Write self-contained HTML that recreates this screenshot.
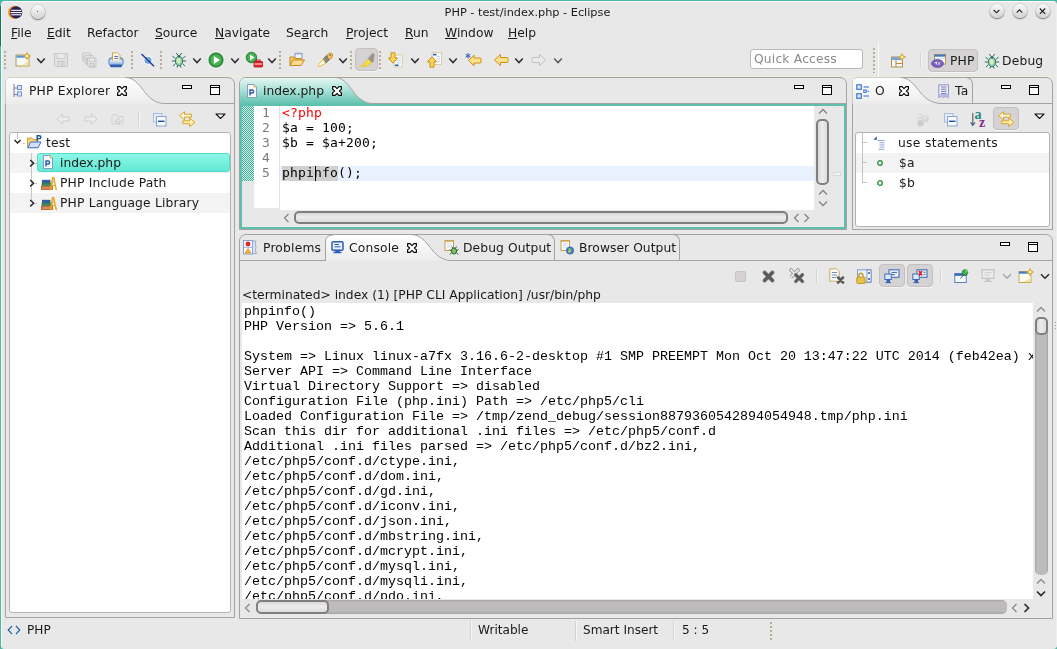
<!DOCTYPE html>
<html lang="en">
<head>
<meta charset="utf-8">
<title>PHP - test/index.php - Eclipse</title>
<style>
*{box-sizing:border-box;margin:0;padding:0}
html,body{width:1057px;height:649px;overflow:hidden}
body{position:relative;background:#e8e8e8;font-family:"DejaVu Sans","Liberation Sans",sans-serif;font-size:12.3px;color:#1a1a1a;line-height:1}
.abs,.t,.ic{position:absolute}
.t{letter-spacing:.18px;white-space:pre;line-height:16px;height:16px;will-change:transform}
.ic{overflow:visible}
u{text-decoration:underline;text-underline-offset:1px;text-decoration-thickness:1px}
.mono{font-family:"DejaVu Sans Mono","Liberation Mono",monospace;font-size:13px;letter-spacing:.174px !important}
.con{font-family:"Liberation Mono","DejaVu Sans Mono",monospace;font-size:13.33px}
.panel{position:absolute;border:1px solid #a9a9a9;border-radius:6px 6px 0 0;background:#e8e8e8}
.white{position:absolute;background:#fff;border:1px solid #b4b4b4;border-radius:3px}
.wbtn{position:absolute;width:14px;height:14px;border-radius:50%;background:linear-gradient(#fbfbfb,#d2d2d2);box-shadow:0 1px 1.5px rgba(0,0,0,.5),0 0 0 .6px rgba(0,0,0,.13)}
.hdl{position:absolute;width:2px;height:18px;background:repeating-linear-gradient(#b9ad95 0 1.7px,transparent 1.7px 4px)}

.pb{position:absolute;border:1px solid #a3a3a3;border-radius:7px 7px 0 0}
.hline{position:absolute;height:1px;background:#a3a3a3}
.min{position:absolute;width:10px;height:4px;border:1px solid #000;background:#fff}
.max{position:absolute;width:10px;height:10px;border:1px solid #000;background:linear-gradient(#fff 1px,#000 1px,#000 2px,#fff 2px)}
.row{position:absolute;left:0;width:100%;height:20px}
.alt{background:#f3f3f3}
.pressed{position:absolute;border-radius:4px;background:#d4d2d2;border:1px solid #c2c0c0;box-shadow:0 1px 0 #f4f4f4}
.vsep{position:absolute;width:2px;background:linear-gradient(90deg,#d2d2d2 50%,#f6f6f6 50%)}
#menubar .t{letter-spacing:0}
.thumb{position:absolute;border:2px solid #837e7e;border-radius:5px}
.tv{background:linear-gradient(90deg,#d9d8d8,#ececec 45%,#dedddd)}
.th{background:linear-gradient(#d9d8d8,#ececec 45%,#dedddd)}
.st .t{letter-spacing:0;font-size:12.1px}
</style>
</head>
<body>
<!-- window frame -->
<div class="abs" id="frame-bg" style="left:0;top:0;width:1057px;height:649px;background:#4cb8a5"></div>
<div class="abs" id="frame-dark" style="left:0;top:6px;width:1px;height:40px;background:#0a7561"></div>
<div class="abs" id="win" style="left:1px;top:1px;width:1056px;height:648px;background:#e8e8e8;border-radius:4px;border-top:1px solid #fdfbfb;border-left:1px solid #fdfbfb;border-right:1px solid #efefef"></div>
<div class="abs" style="left:2px;top:76px;width:1053px;height:1px;background:#f2ecdb"></div>
<!-- TITLEBAR -->
<div id="titlebar">
<svg class="ic" style="left:8.3px;top:5px" width="15" height="15" viewBox="0 0 15 15">
<circle cx="6.6" cy="7.4" r="6.6" fill="#f7941e"/>
<circle cx="8.1" cy="7.4" r="6.2" fill="#2c2255"/>
<rect x="3.2" y="4.8" width="10" height="1.1" fill="#fff"/>
<rect x="2.4" y="7" width="11.6" height="1.1" fill="#fff"/>
<rect x="3.2" y="9.2" width="10" height="1.1" fill="#fff"/>
</svg>
<div class="wbtn" style="left:30.5px;top:4.5px"></div>
<div class="abs" style="left:37px;top:11px;width:1px;height:1px;background:#555"></div>
<div class="t" style="left:444px;top:5px;font-size:11.3px;letter-spacing:0;width:167px;text-align:center">PHP - test/index.php - Eclipse</div>
<div class="wbtn" style="left:989.5px;top:4.3px"></div>
<div class="wbtn" style="left:1012.5px;top:4.3px"></div>
<div class="wbtn" style="left:1035.5px;top:4.3px"></div>
<svg class="ic" style="left:989px;top:4px" width="15" height="15" viewBox="0 0 15 15"><path d="M4.7 6 L7.5 8.8 L10.3 6" fill="none" stroke="#222" stroke-width="1.15"/></svg>
<svg class="ic" style="left:1012px;top:4px" width="15" height="15" viewBox="0 0 15 15"><path d="M4.7 8.6 L7.5 5.8 L10.3 8.6" fill="none" stroke="#222" stroke-width="1.15"/></svg>
<svg class="ic" style="left:1035px;top:4px" width="15" height="15" viewBox="0 0 15 15"><path d="M4.8 4.5 L10.2 9.9 M10.2 4.5 L4.8 9.9" fill="none" stroke="#222" stroke-width="1.15"/></svg>
</div>
<!-- MENUBAR -->
<div id="menubar">
<div class="t" style="left:11px;top:25px"><u>F</u>ile</div>
<div class="t" style="left:47px;top:25px"><u>E</u>dit</div>
<div class="t" style="left:87px;top:25px">Refactor</div>
<div class="t" style="left:155px;top:25px"><u>S</u>ource</div>
<div class="t" style="left:215px;top:25px"><u>N</u>avigate</div>
<div class="t" style="left:286px;top:25px">Se<u>a</u>rch</div>
<div class="t" style="left:346px;top:25px"><u>P</u>roject</div>
<div class="t" style="left:405px;top:25px"><u>R</u>un</div>
<div class="t" style="left:444.6px;top:25px"><u>W</u>indow</div>
<div class="t" style="left:508px;top:25px"><u>H</u>elp</div>
</div>
<!-- TOOLBAR -->
<div id="toolbar">
<div class="hdl" style="left:4px;top:51px"></div>
<svg class="ic" style="left:14.5px;top:52px" width="16" height="16" viewBox="0 0 16 16"><rect x="1" y="3" width="13" height="11" fill="#f6faff" stroke="#b8983e" stroke-width="1"/><rect x="1.5" y="3.5" width="12" height="2.2" fill="#4a96e0"/><path d="M3 13.5 Q10 13 13.5 7 L13.5 13.5 Z" fill="#f3e3a8"/><path d="M12 0.5 L13 3 L15.5 4 L13 5 L12 7.5 L11 5 L8.5 4 L11 3 Z" fill="#fff6c8" stroke="#d9a520" stroke-width="1"/></svg>
<svg class="ic" style="left:36px;top:57px" width="10" height="8" viewBox="0 0 10 8"><path d="M1.2 1.6 L5 5.6 L8.8 1.6" fill="none" stroke="#2e2e2e" stroke-width="1.5"/></svg>
<svg class="ic" style="left:52.5px;top:52px" width="16" height="16" viewBox="0 0 16 16"><path d="M1.5 1.5 H14.5 V14.5 H3 L1.5 13 Z" fill="#e3e3e3" stroke="#c6c6c6"/><rect x="4" y="1.5" width="8" height="5" fill="#e9e9e9" stroke="#cdcdcd"/><rect x="5" y="9.5" width="6" height="5" fill="#dedede" stroke="#c6c6c6"/><rect x="8" y="11" width="1.5" height="2.5" fill="#c8c8c8"/></svg>
<svg class="ic" style="left:80.5px;top:52px" width="16" height="16" viewBox="0 0 16 16"><path d="M1.5 1 H9.5 V4 H3 V9 H1.5 Z" fill="#e3e3e3" stroke="#cacaca"/><path d="M4 3.5 H12 V6 H5.5 V12 H4 Z" fill="#e3e3e3" stroke="#cacaca"/><path d="M6.5 6 H15 V15 H8 L6.5 13.5 Z" fill="#e2e2e2" stroke="#c6c6c6"/><rect x="8.5" y="6" width="5" height="3.5" fill="#eaeaea" stroke="#cdcdcd"/><rect x="9" y="11.5" width="4" height="3.5" fill="#dcdcdc" stroke="#c6c6c6"/></svg>
<svg class="ic" style="left:107.5px;top:52px" width="16" height="16" viewBox="0 0 16 16"><defs><linearGradient id="gpr" x1="0" y1="0" x2="0" y2="1"><stop offset="0" stop-color="#c9dbf4"/><stop offset="1" stop-color="#8db0e2"/></linearGradient></defs><rect x="1" y="6" width="14" height="7.5" rx="2.2" fill="url(#gpr)" stroke="#3f6fb8" stroke-width="1"/><path d="M4.5 9 V0.8 H9.5 L12 3.3 V9 Z" fill="#fffdf2" stroke="#cfa44a" stroke-width="1"/><path d="M6.3 4.4 H10.3 M6.3 6.4 H10.3" stroke="#4a6fc0" stroke-width="1"/><path d="M1.5 9 H14.5 V12 Q14.5 13 13.5 13 H2.5 Q1.5 13 1.5 12 Z" fill="url(#gpr)"/><path d="M2 9 H14" stroke="#e8f0fb" stroke-width="1"/><rect x="2" y="12.6" width="12" height="2.6" rx="1.3" fill="#2f5fb0"/></svg>
<div class="hdl" style="left:131px;top:51px"></div>
<svg class="ic" style="left:139.5px;top:52px" width="16" height="16" viewBox="0 0 16 16"><circle cx="8" cy="8.2" r="4.4" fill="#fff"/><circle cx="8" cy="8.2" r="3.5" fill="#6aa3d4"/><circle cx="7.4" cy="7.6" r="1.8" fill="#9cc4e6"/><path d="M1.5 2 L14 14.2" stroke="#1a2f9a" stroke-width="1.3"/></svg>
<div class="hdl" style="left:160px;top:51px"></div>
<svg class="ic" style="left:170.5px;top:52px" width="16" height="16" viewBox="0 0 16 16"><path d="M8 4.5 L5.2 1 M8 4.5 L10.8 1 M4.5 6.5 L1.5 4.2 M11.5 6.5 L14.5 4.2 M4 9 H0.8 M12 9 H15.2 M4.5 11.5 L2 14.2 M11.5 11.5 L14 14.2 M6.8 13 L6 15.6 M9.2 13 L10 15.6" stroke="#2a6f66" stroke-width="1" fill="none"/><ellipse cx="8" cy="9" rx="3.6" ry="4.7" fill="#9ccf9a" stroke="#2a7a66" stroke-width="1"/><ellipse cx="7.6" cy="8.6" rx="2" ry="2.9" fill="#d2ecc8"/><circle cx="8" cy="4.4" r="1.3" fill="#2a7a66"/></svg>
<svg class="ic" style="left:192px;top:57px" width="10" height="8" viewBox="0 0 10 8"><path d="M1.2 1.6 L5 5.6 L8.8 1.6" fill="none" stroke="#2e2e2e" stroke-width="1.5"/></svg>
<svg class="ic" style="left:208px;top:52px" width="16" height="16" viewBox="0 0 16 16"><circle cx="8" cy="8" r="7" fill="#2f9a3f" stroke="#1d7a2c" stroke-width="1"/><circle cx="8" cy="8" r="5.6" fill="#46b454"/><path d="M5.8 4 L12 8 L5.8 12 Z" fill="#fff"/></svg>
<svg class="ic" style="left:230px;top:57px" width="10" height="8" viewBox="0 0 10 8"><path d="M1.2 1.6 L5 5.6 L8.8 1.6" fill="none" stroke="#2e2e2e" stroke-width="1.5"/></svg>
<svg class="ic" style="left:245.5px;top:52px" width="16" height="16" viewBox="0 0 16 16"><circle cx="5.5" cy="5.5" r="5.3" fill="#2f9a3f" stroke="#1d7a2c" stroke-width=".8"/><circle cx="5.5" cy="5.5" r="4.2" fill="#46b454"/><path d="M4 2.6 L8.6 5.5 L4 8.4 Z" fill="#fff"/><rect x="8" y="9.5" width="8.5" height="5.5" rx=".8" fill="#e3262a" stroke="#b30d12" stroke-width=".8"/><rect x="10.5" y="8" width="3.5" height="2" fill="none" stroke="#c4151a" stroke-width="1"/><path d="M8.5 12 H16" stroke="#fff" stroke-width=".9"/></svg>
<svg class="ic" style="left:267px;top:57px" width="10" height="8" viewBox="0 0 10 8"><path d="M1.2 1.6 L5 5.6 L8.8 1.6" fill="none" stroke="#2e2e2e" stroke-width="1.5"/></svg>
<div class="hdl" style="left:279px;top:51px"></div>
<svg class="ic" style="left:288.5px;top:52px" width="16" height="16" viewBox="0 0 16 16"><rect x="6" y="1.5" width="7" height="7" fill="#f4f6fb" stroke="#7d93c2"/><rect x="7.5" y="0.5" width="4" height="2" fill="#9fb1d6"/><path d="M1 5 H5 L6 6.5 H12 V13.5 H1 Z" fill="#f6c66b" stroke="#c88a1c"/><path d="M1 13.5 L4 8 H15.5 L12 13.5 Z" fill="#fbdc96" stroke="#c88a1c"/></svg>
<svg class="ic" style="left:316.5px;top:52px" width="16" height="16" viewBox="0 0 16 16"><path d="M9.5 3.5 L13 0.8 L15.6 2.2 L15 5.5 L11.5 8.5 Z" fill="#f8c25a" stroke="#c98a1a" stroke-width="1"/><circle cx="13" cy="3.2" r=".8" fill="#2d5fb0"/><path d="M6 7 L9.5 3.5 L12 8 L8.5 11.5 Z" fill="#8d8781" stroke="#6d6660" stroke-width=".8"/><path d="M1 13.5 L6 7 L8.5 11.5 L2 14.8 Z" fill="#fff3b8" stroke="#e8c04e" stroke-width="1"/><path d="M2 13.5 L6 8.5 L7.5 11 Z" fill="#fff"/></svg>
<svg class="ic" style="left:338px;top:57px" width="10" height="8" viewBox="0 0 10 8"><path d="M1.2 1.6 L5 5.6 L8.8 1.6" fill="none" stroke="#2e2e2e" stroke-width="1.5"/></svg>
<div class="hdl" style="left:350px;top:51px"></div>
<div class="pressed" style="left:355px;top:48px;width:23px;height:23px"></div>
<svg class="ic" style="left:358.5px;top:52px" width="16" height="16" viewBox="0 0 16 16"><path d="M9 7 L13.5 1.5 L15.2 2.6 L14.2 9.5 L12.5 10.5 Z" fill="#9a968c" stroke="#8a867c" stroke-width=".6"/><path d="M3.5 13.2 L9 7 L12.5 10.5 L8 14 Z" fill="#f9d84a" stroke="#e4bf2a" stroke-width=".8"/><path d="M0.5 14.3 H6.5" stroke="#f2cf3a" stroke-width="1.4"/></svg>
<div class="hdl" style="left:379px;top:51px"></div>
<svg class="ic" style="left:387.5px;top:52px" width="16" height="16" viewBox="0 0 16 16"><rect x="6" y="3" width="8.5" height="12" fill="#f3f6fb" stroke="#d8c98a" stroke-width=".8"/><path d="M9 6 H13 M9 8.5 H13 M9 11 H13" stroke="#c4d2ea" stroke-width=".9"/><rect x="7" y="12.5" width="3.5" height="1.6" fill="#2d5fb0"/><path d="M3 0.8 H7 V6 H9.6 L5 11.2 L0.4 6 H3 Z" fill="#fbd45e" stroke="#cf8f12" stroke-width="1"/></svg>
<svg class="ic" style="left:410px;top:57px" width="10" height="8" viewBox="0 0 10 8"><path d="M1.2 1.6 L5 5.6 L8.8 1.6" fill="none" stroke="#2e2e2e" stroke-width="1.5"/></svg>
<svg class="ic" style="left:426.5px;top:52px" width="16" height="16" viewBox="0 0 16 16"><rect x="5" y="0.5" width="9.5" height="12" fill="#f3f6fb" stroke="#d8c98a" stroke-width=".8"/><path d="M10 4.5 H13 M10 7 H13 M10 9.5 H13" stroke="#c4d2ea" stroke-width=".9"/><rect x="6" y="1.8" width="3.5" height="1.6" fill="#2d5fb0"/><path d="M3 15.2 H7 V10 H9.6 L5 4.8 L0.4 10 H3 Z" fill="#fbd45e" stroke="#cf8f12" stroke-width="1"/></svg>
<svg class="ic" style="left:448px;top:57px" width="10" height="8" viewBox="0 0 10 8"><path d="M1.2 1.6 L5 5.6 L8.8 1.6" fill="none" stroke="#2e2e2e" stroke-width="1.5"/></svg>
<svg class="ic" style="left:464.5px;top:52px" width="16" height="16" viewBox="0 0 16 16"><path d="M3.5 8.5 L9 3.2 V6 H15 Q16 6 16 7 V10 Q16 11 15 11 H9 V13.8 Z" fill="#fbe08a" stroke="#cf8f12" stroke-width="1"/><path d="M3 1 V6.5 M0.6 2.4 L5.4 5.1 M5.4 2.4 L0.6 5.1" stroke="#2d5fb0" stroke-width="1"/></svg>
<svg class="ic" style="left:492.5px;top:52px" width="16" height="16" viewBox="0 0 16 16"><path d="M1.5 8 L7.5 2.4 V5.5 H14 Q15 5.5 15 6.5 V9.5 Q15 10.5 14 10.5 H7.5 V13.6 Z" fill="#fbe08a" stroke="#cf8f12" stroke-width="1"/></svg>
<svg class="ic" style="left:514px;top:57px" width="10" height="8" viewBox="0 0 10 8"><path d="M1.2 1.6 L5 5.6 L8.8 1.6" fill="none" stroke="#2e2e2e" stroke-width="1.5"/></svg>
<svg class="ic" style="left:531px;top:52px" width="16" height="16" viewBox="0 0 16 16"><path d="M14.5 8 L8.5 2.4 V5.5 H2 Q1 5.5 1 6.5 V9.5 Q1 10.5 2 10.5 H8.5 V13.6 Z" fill="#ebebeb" stroke="#c4c1bc" stroke-width="1"/></svg>
<svg class="ic" style="left:552.5px;top:57px" width="10" height="8" viewBox="0 0 10 8"><path d="M1.2 1.6 L5 5.6 L8.8 1.6" fill="none" stroke="#5a5a5a" stroke-width="1.5"/></svg>
<div class="abs" style="left:750px;top:49px;width:113px;height:20px;background:#fff;border:1px solid #b9b9b9;border-radius:3px"></div>
<div class="t" style="left:754px;top:51px;color:#8a8a8a">Quick Access</div>
<div class="hdl" style="left:873px;top:48px;height:25px"></div>
<div class="abs" style="left:878px;top:43px;width:1px;height:33px;background:#fafafa"></div>
<svg class="ic" style="left:890px;top:53.3px" width="16" height="16" viewBox="0 0 16 16"><rect x="1.5" y="4" width="11" height="10" fill="#f4f6fb" stroke="#b8923a" stroke-width="1"/><rect x="1.5" y="4" width="11" height="3" fill="#7da0d6"/><path d="M6 7 V14 M6 10.5 H12.5" stroke="#b8923a" stroke-width="1"/><path d="M12 0.5 L13 3 L15.5 4 L13 5 L12 7.5 L11 5 L8.5 4 L11 3 Z" fill="#fff6c8" stroke="#d9a520" stroke-width="1"/></svg>
<div class="vsep" style="left:920px;top:53px;height:14px"></div>
<div class="pressed" style="left:928px;top:49px;width:50px;height:23px"></div>
<svg class="ic" style="left:931px;top:52.8px" width="16" height="16" viewBox="0 0 16 16"><rect x="3.5" y="1.5" width="11" height="9.5" fill="#fbfcfe" stroke="#b8983e" stroke-width="1"/><rect x="3.5" y="1.5" width="11" height="2.2" fill="#3f78c8"/><path d="M4 5.5 H14" stroke="#c9d6ec" stroke-width=".8"/><ellipse cx="6.5" cy="10.5" rx="6" ry="4" fill="#7b5cc0" stroke="#5a3f9e" stroke-width=".6"/><path d="M3.6 10.2 L5.4 9 V11.6 M6.6 9.2 L8 10.4 L9.4 9.2 M8 10.4 V12.2" fill="none" stroke="#f3eefc" stroke-width="1"/></svg>
<div class="t" style="left:950px;top:53px">PHP</div>
<svg class="ic" style="left:983.5px;top:53px" width="16" height="16" viewBox="0 0 16 16"><path d="M8 4.5 L5.2 1 M8 4.5 L10.8 1 M4.5 6.5 L1.5 4.2 M11.5 6.5 L14.5 4.2 M4 9 H0.8 M12 9 H15.2 M4.5 11.5 L2 14.2 M11.5 11.5 L14 14.2 M6.8 13 L6 15.6 M9.2 13 L10 15.6" stroke="#2a6f66" stroke-width="1" fill="none"/><ellipse cx="8" cy="9" rx="3.6" ry="4.7" fill="#9ccf9a" stroke="#2a7a66" stroke-width="1"/><ellipse cx="7.6" cy="8.6" rx="2" ry="2.9" fill="#d2ecc8"/><circle cx="8" cy="4.4" r="1.3" fill="#2a7a66"/></svg>
<div class="t" style="left:1002px;top:53px">Debug</div>
</div>
<!-- EXPLORER -->
<div id="explorer">
<div class="pb" style="left:5px;top:77px;width:230px;height:541px"></div>
<svg class="ic" style="left:5px;top:77px" width="170" height="28" viewBox="0 0 170 28" ><defs><linearGradient id="gtab" x1="0" y1="0" x2="0" y2="1"><stop offset="0" stop-color="#fff"/><stop offset="1" stop-color="#ececec"/></linearGradient></defs><path d="M0.5 27 V7 Q0.5 0.5 7 0.5 H120 C138 0.5 138 26.5 160 26.5 H229.5" fill="url(#gtab)" stroke="none"/><path d="M120 0.5 C138 0.5 138 26.5 160 26.5 H170" fill="none" stroke="#a3a3a3" stroke-width="1"/></svg>
<div class="hline" style="left:164px;top:103px;width:70px"></div>
<svg class="ic" style="left:13px;top:84px" width="12" height="14" viewBox="0 0 12 14" ><path d="M1 0 V13 M1 4 H4 M1 10.5 H4" stroke="#7a7a9a" stroke-width="1" fill="none"/><rect x="4.5" y="1.5" width="4" height="4" fill="#dfe8f8" stroke="#6f8fd0"/><rect x="4.5" y="8" width="4" height="4" fill="#dfe8f8" stroke="#6f8fd0"/></svg>
<div class="t" style="left:29px;top:83px">PHP Explorer</div>
<svg class="ic" style="left:117px;top:86px" width="10" height="10" viewBox="0 0 10 10"><path d="M0.6 0.6 L3.1 0.6 L5 2.6 L6.9 0.6 L9.4 0.6 L9.4 3.1 L7.4 5 L9.4 6.9 L9.4 9.4 L6.9 9.4 L5 7.4 L3.1 9.4 L0.6 9.4 L0.6 6.9 L2.6 5 L0.6 3.1 Z" fill="#fff" stroke="#0a0a0a" stroke-width="1.2" stroke-linejoin="round"/></svg>
<div class="min" style="left:182px;top:85px"></div><div class="max" style="left:210px;top:85px"></div>
<svg class="ic" style="left:56px;top:113px" width="14" height="12" viewBox="0 0 14 12" ><path d="M1 6 L6.5 1 V4 H13 V8 H6.5 V11 Z" fill="#ececec" stroke="#cfcdca" stroke-width="1" stroke-linejoin="round"/></svg>
<svg class="ic" style="left:84px;top:113px" width="14" height="12" viewBox="0 0 14 12" ><path d="M13 6 L7.5 1 V4 H1 V8 H7.5 V11 Z" fill="#ececec" stroke="#cfcdca" stroke-width="1" stroke-linejoin="round"/></svg>
<svg class="ic" style="left:111px;top:112px" width="14" height="15" viewBox="0 0 14 15" ><path d="M1 3 V12 H12 V4.5 H6 L5 2.5 H1.5 Z" fill="#e9e9e9" stroke="#d0d0d0"/><path d="M7 6 L3.5 9.5 H5.5 V12 H8.5 V9.5 H10.5 Z" fill="#e0e0e0" stroke="#c8c8c8" stroke-width=".8"/></svg>
<div class="vsep" style="left:138px;top:112px;height:15px"></div>
<svg class="ic" style="left:152px;top:112px" width="15" height="15" viewBox="0 0 15 15" ><rect x="1.5" y="1.5" width="8.5" height="8.5" fill="#e6edf8" stroke="#a9bbdc"/><rect x="4.5" y="4.5" width="9.5" height="9.5" fill="#f6f9fd" stroke="#8aa3d0"/><path d="M6 9.3 H12.5" stroke="#1f4f9a" stroke-width="1.4"/></svg>
<svg class="ic" style="left:179px;top:111px" width="17" height="17" viewBox="0 0 17 17" ><path d="M0.7 4.7 L5.5 0.7 V3.2 H12.4 V6.1 H5.5 V8.7 Z" fill="#fff9e0" stroke="#d9a520" stroke-width="1" stroke-linejoin="round"/><path d="M16 11.3 L10.6 7.1 V9.8 H3.8 V12.7 H10.6 V15.5 Z" fill="#ffefb4" stroke="#d9a520" stroke-width="1" stroke-linejoin="round"/></svg>
<svg class="ic" style="left:215px;top:113px" width="11" height="7" viewBox="0 0 11 7" ><path d="M1 1 H10 L5.5 5.5 Z" fill="#fff" stroke="#111" stroke-width="1.1" stroke-linejoin="round"/></svg>
<div class="white" style="left:9px;top:132px;width:222px;height:481px;overflow:hidden">
<div class="row alt" style="top:20px"></div><div class="row alt" style="top:60px"></div>
</div>
<div class="abs" style="left:17px;top:133px;width:1px;height:6px;background:#bdbdbd"></div>
<div class="abs" style="left:31px;top:153px;width:1px;height:47px;background:#c6c6c6"></div><div class="abs" style="left:35px;top:163px;width:2px;height:1px;background:#c6c6c6"></div><div class="abs" style="left:35px;top:183px;width:2px;height:1px;background:#c6c6c6"></div><div class="abs" style="left:35px;top:203px;width:2px;height:1px;background:#c6c6c6"></div><div class="abs" style="left:23px;top:143px;width:2px;height:1px;background:#c6c6c6"></div>
<svg class="ic" style="left:13px;top:139px" width="9" height="6" viewBox="0 0 9 6" ><path d="M1.5 1 L4.5 4 L7.5 1" fill="none" stroke="#2a2a2a" stroke-width="1.5"/></svg>
<svg class="ic" style="left:27px;top:135px" width="15" height="14" viewBox="0 0 15 14" ><path d="M0.5 3 H5 L6 4.5 H11 V12.5 H0.5 Z" fill="#f6d27a" stroke="#c99a2a" stroke-width=".9"/><path d="M0.8 12.8 L3.5 7 H14 L11 12.8 Z" fill="#cfe0f8" stroke="#3b6fc4" stroke-width="1"/><path d="M10.2 6 V0.8 H12.4 Q13.8 0.8 13.8 2.2 Q13.8 3.6 12.4 3.6 H10.2" fill="none" stroke="#1f4f9a" stroke-width="1.4"/></svg>
<div class="t" style="left:46px;top:135px">test</div>
<div class="abs" style="left:37px;top:153px;width:193px;height:19px;border-radius:3px;background:linear-gradient(#8cf7e7,#63e8d5);border:1px solid #55dcc8"></div>
<svg class="ic" style="left:28.5px;top:159px" width="6" height="9" viewBox="0 0 6 9" ><path d="M1.2 1 L4.6 4.2 L1.2 7.4" fill="none" stroke="#2a2a2a" stroke-width="1.5"/></svg>
<svg class="ic" style="left:42px;top:155px" width="12" height="14" viewBox="0 0 12 14" ><path d="M1.5 0.5 H8 L10.5 3 V13.5 H1.5 Z" fill="#fbfbfd" stroke="#8a9cc4" stroke-width="1"/><path d="M8 0.5 V3 H10.5" fill="#f3d9a0" stroke="#d6a94a" stroke-width=".8"/><path d="M4 11.6 V6 H6.2 Q7.6 6 7.6 7.5 Q7.6 9 6.2 9 H4" fill="none" stroke="#2c5aa8" stroke-width="1.4"/></svg>
<div class="t" style="left:60px;top:155px;letter-spacing:0">index.php</div>
<svg class="ic" style="left:28.5px;top:179px" width="6" height="9" viewBox="0 0 6 9" ><path d="M1.2 1 L4.6 4.2 L1.2 7.4" fill="none" stroke="#2a2a2a" stroke-width="1.5"/></svg>
<svg class="ic" style="left:41px;top:176px" width="16" height="14" viewBox="0 0 16 14" ><rect x="1.5" y="4.2" width="7.5" height="2.4" fill="#2d5fb0" stroke="#1f4790" stroke-width=".7"/><rect x="1" y="7" width="10" height="2.8" fill="#3e8f62" stroke="#2a6a46" stroke-width=".7"/><rect x="0.5" y="10.2" width="11" height="3.3" fill="#d98a5a" stroke="#b25a22" stroke-width=".8"/><path d="M9.6 13.4 L11.6 1.6 M12.6 1.6 L15.2 13.4" fill="none" stroke="#e9a820" stroke-width="1.5" stroke-linecap="round"/><path d="M11 6 H13.5 M10.6 9.5 H14.2" stroke="#e9a820" stroke-width="1.1"/></svg>
<div class="t" style="left:60px;top:175px">PHP Include Path</div>
<svg class="ic" style="left:28.5px;top:199px" width="6" height="9" viewBox="0 0 6 9" ><path d="M1.2 1 L4.6 4.2 L1.2 7.4" fill="none" stroke="#2a2a2a" stroke-width="1.5"/></svg>
<svg class="ic" style="left:41px;top:196px" width="16" height="14" viewBox="0 0 16 14" ><rect x="1.5" y="4.2" width="7.5" height="2.4" fill="#2d5fb0" stroke="#1f4790" stroke-width=".7"/><rect x="1" y="7" width="10" height="2.8" fill="#3e8f62" stroke="#2a6a46" stroke-width=".7"/><rect x="0.5" y="10.2" width="11" height="3.3" fill="#d98a5a" stroke="#b25a22" stroke-width=".8"/><path d="M9.6 13.4 L11.6 1.6 M12.6 1.6 L15.2 13.4" fill="none" stroke="#e9a820" stroke-width="1.5" stroke-linecap="round"/><path d="M11 6 H13.5 M10.6 9.5 H14.2" stroke="#e9a820" stroke-width="1.1"/></svg>
<div class="t" style="left:60px;top:195px">PHP Language Library</div>
</div>
<!-- EDITOR -->
<div id="editor">
<div class="pb" style="left:239px;top:77px;width:608px;height:153px;border-bottom:1px solid #a3a3a3;border-radius:7px 7px 0 0"></div>
<div class="abs" style="left:240px;top:104px;width:606px;height:125px;border:2px solid #5cc0ad;background:#e8e8e8"></div>
<svg class="ic" style="left:239px;top:77px" width="140" height="28" viewBox="0 0 140 28" ><defs><linearGradient id="gted" x1="0" y1="0" x2="0" y2="1"><stop offset="0" stop-color="#e4f7f2"/><stop offset=".45" stop-color="#a9e1d6"/><stop offset="1" stop-color="#5cc0ad"/></linearGradient></defs><path d="M1 28 V7 Q1 1 7 1 H96 C112 1 114 26.5 134 26.5 H140 V28 Z" fill="url(#gted)"/><path d="M96 0.5 C112 0.5 114 26.5 134 26.5 H140" fill="none" stroke="#a3a3a3" stroke-width="1"/></svg>
<div class="hline" style="left:375px;top:103px;width:471px"></div>
<svg class="ic" style="left:246px;top:84px" width="12" height="14" viewBox="0 0 12 14" ><path d="M1.5 0.5 H8 L10.5 3 V13.5 H1.5 Z" fill="#fbfbfd" stroke="#8a9cc4" stroke-width="1"/><path d="M8 0.5 V3 H10.5" fill="#f3d9a0" stroke="#d6a94a" stroke-width=".8"/><path d="M4 11.6 V6 H6.2 Q7.6 6 7.6 7.5 Q7.6 9 6.2 9 H4" fill="none" stroke="#2c5aa8" stroke-width="1.4"/></svg>
<div class="t" style="left:263px;top:83px;letter-spacing:0">index.php</div>
<svg class="ic" style="left:332px;top:86px" width="10" height="10" viewBox="0 0 10 10"><path d="M0.6 0.6 L3.1 0.6 L5 2.6 L6.9 0.6 L9.4 0.6 L9.4 3.1 L7.4 5 L9.4 6.9 L9.4 9.4 L6.9 9.4 L5 7.4 L3.1 9.4 L0.6 9.4 L0.6 6.9 L2.6 5 L0.6 3.1 Z" fill="#fff" stroke="#0a0a0a" stroke-width="1.2" stroke-linejoin="round"/></svg>
<div class="min" style="left:794px;top:85px"></div><div class="max" style="left:822px;top:85px"></div>
<div class="abs" style="left:242px;top:106px;width:12px;height:75px;background:#54b9a5;background-image:conic-gradient(#d6efe9 25%,#3fae98 0 50%,#d6efe9 0 75%,#3fae98 0);background-size:2px 2px"></div>
<div class="abs" style="left:254px;top:106px;width:26px;height:102px;background:#fff"></div>
<div class="abs" style="left:279px;top:106px;width:1px;height:102px;background:#e4e4e4"></div>
<div class="abs" style="left:280px;top:106px;width:534px;height:104px;background:#fff"></div>
<div class="abs" style="left:280px;top:166px;width:534px;height:15px;background:#e8f1fd"></div>
<div class="abs" style="left:282px;top:166px;width:56px;height:15px;background:#d0d0d0"></div>
<div class="t mono" style="left:262px;top:105px;height:15px;line-height:15px;color:#7a7a7a">1</div>
<div class="t mono" style="left:262px;top:120px;height:15px;line-height:15px;color:#7a7a7a">2</div>
<div class="t mono" style="left:262px;top:135px;height:15px;line-height:15px;color:#7a7a7a">3</div>
<div class="t mono" style="left:262px;top:150px;height:15px;line-height:15px;color:#7a7a7a">4</div>
<div class="t mono" style="left:262px;top:165px;height:15px;line-height:15px;color:#7a7a7a">5</div>
<div class="t mono" style="left:282px;top:105px;height:15px;line-height:15px;color:#000"><span style="color:#f00">&lt;?php</span></div>
<div class="t mono" style="left:282px;top:120px;height:15px;line-height:15px;color:#000">$a = 100;</div>
<div class="t mono" style="left:282px;top:135px;height:15px;line-height:15px;color:#000">$b = $a+200;</div>
<div class="t mono" style="left:282px;top:165px;height:15px;line-height:15px;color:#000">phpinfo();</div>
<div class="abs" style="left:314.5px;top:166px;width:1.5px;height:15px;background:#000"></div>
<svg class="ic" style="left:818px;top:108px" width="10" height="7" viewBox="0 0 10 7" ><path d="M1 5.5 L5 1.5 L9 5.5" fill="none" stroke="#858585" stroke-width="1.25"/></svg>
<div class="thumb tv" style="left:816px;top:119px;width:13px;height:66px"></div>
<svg class="ic" style="left:818px;top:189px" width="10" height="7" viewBox="0 0 10 7" ><path d="M1 5.5 L5 1.5 L9 5.5" fill="none" stroke="#858585" stroke-width="1.25"/></svg>
<svg class="ic" style="left:818px;top:200px" width="10" height="7" viewBox="0 0 10 7" ><path d="M1 1.5 L5 5.5 L9 1.5" fill="none" stroke="#858585" stroke-width="1.25"/></svg>
<div class="abs" style="left:833px;top:172px;width:8px;height:4px;background:#f4f4f4;border:1px solid #d8d8d8"></div>
<svg class="ic" style="left:283px;top:213px" width="7" height="10" viewBox="0 0 7 10" ><path d="M5.5 1 L1.5 5 L5.5 9" fill="none" stroke="#858585" stroke-width="1.25"/></svg>
<div class="thumb th" style="left:294px;top:211px;width:494px;height:13px"></div>
<svg class="ic" style="left:793px;top:213px" width="7" height="10" viewBox="0 0 7 10" ><path d="M5.5 1 L1.5 5 L5.5 9" fill="none" stroke="#858585" stroke-width="1.25"/></svg>
<svg class="ic" style="left:803px;top:213px" width="7" height="10" viewBox="0 0 7 10" ><path d="M1.5 1 L5.5 5 L1.5 9" fill="none" stroke="#858585" stroke-width="1.25"/></svg>
</div>
<!-- OUTLINE -->
<div id="outline">
<div class="pb" style="left:852px;top:77px;width:201px;height:153px;border-bottom:1px solid #a3a3a3"></div>
<svg class="ic" style="left:852px;top:77px" width="100" height="28" viewBox="0 0 100 28" ><path d="M0.5 27 V7 Q0.5 0.5 7 0.5 H48 C66 0.5 66 26.5 90 26.5 H100" fill="url(#gtab)"/><path d="M48 0.5 C66 0.5 66 26.5 90 26.5 H100" fill="none" stroke="#a3a3a3"/></svg>
<div class="abs" style="left:906px;top:77px;width:67px;height:27px;border:1px solid #a3a3a3;border-left:none;border-bottom:none;border-radius:0 7px 0 0"></div>
<div class="hline" style="left:940px;top:103px;width:112px"></div>
<svg class="ic" style="left:856px;top:84px" width="14" height="15" viewBox="0 0 14 15" ><rect x="0.8" y="0.8" width="4.5" height="4.5" fill="#dfe8f8" stroke="#2f6fc4" stroke-width="1.1"/><rect x="0.8" y="9.8" width="4.5" height="4.5" fill="#dfe8f8" stroke="#2f6fc4" stroke-width="1.1"/><rect x="7.8" y="6" width="2.4" height="2.4" fill="#fff" stroke="#2f6fc4" stroke-width="1"/><path d="M7.5 3 H13 M11.5 7.2 H13 M7.5 12 H13" stroke="#2f6fc4" stroke-width="1.1"/></svg>
<div class="t" style="left:875px;top:83px">O</div>
<svg class="ic" style="left:899px;top:86px" width="10" height="10" viewBox="0 0 10 10"><path d="M0.6 0.6 L3.1 0.6 L5 2.6 L6.9 0.6 L9.4 0.6 L9.4 3.1 L7.4 5 L9.4 6.9 L9.4 9.4 L6.9 9.4 L5 7.4 L3.1 9.4 L0.6 9.4 L0.6 6.9 L2.6 5 L0.6 3.1 Z" fill="#fff" stroke="#0a0a0a" stroke-width="1.2" stroke-linejoin="round"/></svg>
<svg class="ic" style="left:938px;top:84px" width="12" height="15" viewBox="0 0 12 15" ><path d="M0.8 0.8 H10.5 V13.6 L8 12.2 L5.6 13.6 L3.2 12.2 L0.8 13.6 Z" fill="#eceefa" stroke="#8a8fc8" stroke-width="1"/><path d="M0.8 10 H10.5 V13.6 L8 12.2 L5.6 13.6 L3.2 12.2 L0.8 13.6 Z" fill="#b9bde8"/><path d="M3 3 H8.5 M3 5.2 H8.5 M3 7.4 H8.5 M3 9.6 H8.5" stroke="#5a5f9a" stroke-width=".8"/></svg>
<div class="t" style="left:955px;top:83px">Ta</div>
<div class="min" style="left:1001px;top:85px"></div><div class="max" style="left:1029px;top:85px"></div>
<svg class="ic" style="left:916px;top:113px" width="14" height="14" viewBox="0 0 14 14" ><circle cx="4" cy="3.6" r="3" fill="#dcdcdc"/><circle cx="9.5" cy="6" r="3.4" fill="#d6d6d6"/><circle cx="4.5" cy="10.2" r="3.2" fill="#cdcdcd"/><circle cx="3.4" cy="2.8" r="1.2" fill="#ebebeb"/><circle cx="8.8" cy="5" r="1.4" fill="#e8e8e8"/></svg>
<svg class="ic" style="left:943px;top:112px" width="15" height="15" viewBox="0 0 15 15" ><rect x="1.5" y="1.5" width="8.5" height="8.5" fill="#e6edf8" stroke="#a9bbdc"/><rect x="4.5" y="4.5" width="9.5" height="9.5" fill="#f6f9fd" stroke="#8aa3d0"/><path d="M6 9.3 H12.5" stroke="#1f4f9a" stroke-width="1.4"/></svg>
<svg class="ic" style="left:970px;top:112px" width="17" height="16" viewBox="0 0 17 16" ><path d="M2.8 1 V13 M0.6 10.2 L2.8 13.6 L5 10.2" fill="none" stroke="#4a5a7a" stroke-width="1.1"/><text x="4.6" y="7.2" font-family="Liberation Serif,serif" font-weight="bold" font-size="14" fill="#1f8a78">a</text><text x="9" y="15" font-family="Liberation Serif,serif" font-weight="bold" font-size="14" fill="#8a2a8a">z</text></svg>
<div class="pressed" style="left:993px;top:107px;width:26px;height:23px"></div>
<svg class="ic" style="left:998px;top:111px" width="17" height="17" viewBox="0 0 17 17" ><path d="M0.7 4.7 L5.5 0.7 V3.2 H12.4 V6.1 H5.5 V8.7 Z" fill="#fff9e0" stroke="#d9a520" stroke-width="1" stroke-linejoin="round"/><path d="M16 11.3 L10.6 7.1 V9.8 H3.8 V12.7 H10.6 V15.5 Z" fill="#ffefb4" stroke="#d9a520" stroke-width="1" stroke-linejoin="round"/></svg>
<svg class="ic" style="left:1034px;top:113px" width="11" height="7" viewBox="0 0 11 7" ><path d="M1 1 H10 L5.5 5.5 Z" fill="#fff" stroke="#111" stroke-width="1.1" stroke-linejoin="round"/></svg>
<div class="white" style="left:855px;top:132px;width:195px;height:95px;overflow:hidden"><div class="row alt" style="top:20px"></div></div>
<div class="abs" style="left:862px;top:133px;width:1px;height:50px;background:#c4c4c4"></div>
<div class="abs" style="left:862px;top:142px;width:5px;height:1px;background:#c4c4c4"></div><div class="abs" style="left:862px;top:162px;width:5px;height:1px;background:#c4c4c4"></div><div class="abs" style="left:862px;top:182px;width:5px;height:1px;background:#c4c4c4"></div>
<svg class="ic" style="left:873px;top:136px" width="12" height="14" viewBox="0 0 12 14" ><path d="M0.5 3.8 L3.8 0.5 V3.8 Z" fill="#1f4f9a"/><path d="M4.5 4.5 H11.5 M6.5 6.7 H11.5 M6.5 8.9 H11.5 M6.5 11.1 H11.5 M5.5 13.3 H11.5" stroke="#5f7fc0" stroke-width=".7"/></svg>
<div class="t" style="left:898px;top:135px;letter-spacing:.33px">use statements</div>
<svg class="ic" style="left:876px;top:159px" width="8" height="8" viewBox="0 0 8 8" ><circle cx="4" cy="4" r="2.3" fill="#e8f6e8" stroke="#2f8a3f" stroke-width="1.3"/></svg>
<div class="t" style="left:899px;top:155px">$a</div>
<svg class="ic" style="left:876px;top:179px" width="8" height="8" viewBox="0 0 8 8" ><circle cx="4" cy="4" r="2.3" fill="#e8f6e8" stroke="#2f8a3f" stroke-width="1.3"/></svg>
<div class="t" style="left:899px;top:175px">$b</div>
</div>
<!-- BOTTOM -->
<div id="bottom">
<div class="pb" style="left:239px;top:234px;width:814px;height:385px;border-bottom:1px solid #a3a3a3"></div>
<svg class="ic" style="left:325px;top:234px" width="130" height="28" viewBox="0 0 130 28" ><path d="M0.5 27 V8 Q0.5 1 8 1 H86 C104 1 106 26.5 126 26.5 H130 V27 Z" fill="url(#gtab)"/><path d="M0.5 26.5 V8 Q0.5 1 8 1" fill="none" stroke="#a3a3a3"/><path d="M86 0.5 C104 0.5 106 26.5 126 26.5 H130" fill="none" stroke="#a3a3a3"/></svg>
<div class="hline" style="left:240px;top:260px;width:86px"></div>
<div class="hline" style="left:452px;top:260px;width:600px"></div>
<div class="abs" style="left:440px;top:234px;width:115px;height:27px;border-right:1px solid #a3a3a3;border-top:1px solid #a3a3a3;border-radius:0 7px 0 0"></div>
<div class="abs" style="left:555px;top:234px;width:125px;height:27px;border-right:1px solid #a3a3a3;border-top:1px solid #a3a3a3;border-radius:0 7px 0 0"></div>
<svg class="ic" style="left:243px;top:240px" width="15" height="15" viewBox="0 0 15 15" ><rect x="0.5" y="0.5" width="9" height="13.5" fill="#fbfcfe" stroke="#8aa0cc" stroke-width="1"/><path d="M9.5 1 H13 Q11.5 4 13 7 Q11.5 10 13.5 13.5 H9.5 Z" fill="#d6e4f6" stroke="#8aa0cc" stroke-width=".8"/><path d="M0.5 7.3 H9.5" stroke="#8aa0cc" stroke-width=".8"/><circle cx="5" cy="4" r="2.4" fill="#e3262a"/><path d="M5 8.6 L7.8 13 H2.2 Z" fill="#f6b73c" stroke="#d98a12" stroke-width=".8"/></svg>
<div class="t" style="left:263px;top:240px">Problems</div>
<svg class="ic" style="left:331px;top:241px" width="14" height="13" viewBox="0 0 14 13" ><rect x="1" y="0.8" width="11" height="8.4" rx="1" fill="#e8f0fb" stroke="#2f5fb8" stroke-width="1.5"/><path d="M3.5 3.5 H8 M3.5 5.8 H9.5" stroke="#2f5fb8" stroke-width="1"/><path d="M5 9.5 H8 V11 H5 Z M2.5 11.5 H10.5" stroke="#2f5fb8" stroke-width="1.4" fill="#2f5fb8"/></svg>
<div class="t" style="left:349px;top:240px">Console</div>
<svg class="ic" style="left:407px;top:243px" width="10" height="10" viewBox="0 0 10 10"><path d="M0.6 0.6 L3.1 0.6 L5 2.6 L6.9 0.6 L9.4 0.6 L9.4 3.1 L7.4 5 L9.4 6.9 L9.4 9.4 L6.9 9.4 L5 7.4 L3.1 9.4 L0.6 9.4 L0.6 6.9 L2.6 5 L0.6 3.1 Z" fill="#fff" stroke="#0a0a0a" stroke-width="1.2" stroke-linejoin="round"/></svg>
<svg class="ic" style="left:444px;top:240px" width="15" height="15" viewBox="0 0 15 15" ><rect x="1" y="1" width="8.5" height="9.5" fill="#f6f8fc" stroke="#c9a04a" stroke-width="1"/><path d="M3 3.6 H7.5 M3 5.4 H7.5 M3 7.2 H6.5" stroke="#ccd7ee" stroke-width=".7"/><path d="M0.5 0.8 H10" stroke="#c9a04a" stroke-width="1.2"/><path d="M10 9 L7.5 6.5 M10 9 L13 6.5 M7 10.5 L5.5 9.5 M13 10.5 L14.5 9.5 M7.5 12.5 L6 14.5 M12.5 12.5 L14 14.5" stroke="#2f6a5a" stroke-width="1"/><ellipse cx="10" cy="11" rx="2.6" ry="3.1" fill="#86bf52" stroke="#256a3a" stroke-width="1"/></svg>
<div class="t" style="left:463px;top:240px;letter-spacing:.1px">Debug Output</div>
<svg class="ic" style="left:560px;top:240px" width="15" height="15" viewBox="0 0 15 15" ><rect x="1" y="1" width="8.5" height="9.5" fill="#f6f8fc" stroke="#c9a04a" stroke-width="1"/><path d="M3 3.6 H7.5 M3 5.4 H7.5 M3 7.2 H6.5" stroke="#ccd7ee" stroke-width=".7"/><path d="M0.5 0.8 H10" stroke="#c9a04a" stroke-width="1.2"/><circle cx="10" cy="10.5" r="3.6" fill="#3f7fd0" stroke="#2a5aa0" stroke-width=".8"/><path d="M8 9 Q10 7.5 11.5 9.5 Q10.5 11 11.5 13" fill="#7fc75a" stroke="none"/><circle cx="9.3" cy="11.5" r="1.2" fill="#e8c84a"/></svg>
<div class="t" style="left:579px;top:240px;letter-spacing:.05px">Browser Output</div>
<div class="min" style="left:1000px;top:242px"></div><div class="max" style="left:1028px;top:242px"></div>
<div class="abs" style="left:735px;top:271px;width:11px;height:11px;border-radius:2px;background:#d6d2d2;border:1px solid #c9c5c5"></div>
<svg class="ic" style="left:762px;top:270px" width="13" height="13" viewBox="0 0 13 13" ><path d="M2.6 2.6 L10.4 10.4 M10.4 2.6 L2.6 10.4" fill="none" stroke="#9a9a9a" stroke-width="4.2" stroke-linecap="round"/><path d="M2.6 2.6 L10.4 10.4 M10.4 2.6 L2.6 10.4" fill="none" stroke="#5a5a5a" stroke-width="3" stroke-linecap="round"/></svg>
<svg class="ic" style="left:789px;top:268px" width="16" height="16" viewBox="0 0 16 16" ><path d="M2 2 L9 9 M9 2 L2 9" fill="none" stroke="#8a8a8a" stroke-width="3.6" stroke-linecap="round" stroke-dasharray="1 1"/><path d="M2 2 L9 9 M9 2 L2 9" fill="none" stroke="#e6e6e6" stroke-width="2.2" stroke-linecap="round"/><g transform="translate(4.5,4.5) scale(.86)"><path d="M2.6 2.6 L10.4 10.4 M10.4 2.6 L2.6 10.4" fill="none" stroke="#9a9a9a" stroke-width="4.2" stroke-linecap="round"/><path d="M2.6 2.6 L10.4 10.4 M10.4 2.6 L2.6 10.4" fill="none" stroke="#5a5a5a" stroke-width="3" stroke-linecap="round"/></g></svg>
<div class="vsep" style="left:816px;top:269px;height:14px"></div>
<svg class="ic" style="left:829px;top:268px" width="16" height="16" viewBox="0 0 16 16" ><path d="M0.8 0.8 H7.5 L10.2 3.5 V13.2 H0.8 Z" fill="#fdfdf8" stroke="#c9a95a" stroke-width="1"/><path d="M2.8 4.5 H8 M2.8 7 H8 M2.8 9.5 H7" stroke="#5f7fc0" stroke-width=".9"/><path d="M9 9.5 L14 14.5 M14 9.5 L9 14.5" fill="none" stroke="#8e8e8e" stroke-width="3" stroke-linecap="round"/><path d="M9 9.5 L14 14.5 M14 9.5 L9 14.5" fill="none" stroke="#555" stroke-width="2" stroke-linecap="round"/></svg>
<svg class="ic" style="left:856px;top:269px" width="16" height="15" viewBox="0 0 16 15" ><rect x="1.5" y="0.8" width="13.5" height="12.5" fill="#eaf2fc" stroke="#7f9bd0" stroke-width="1"/><rect x="11" y="1" width="4" height="12" fill="#fff" stroke="#5f7fc0" stroke-width=".8"/><rect x="12.2" y="3" width="1.6" height="2" fill="#2f5fb0"/><rect x="12.2" y="9" width="1.6" height="2" fill="#2f5fb0"/><path d="M3 8.5 V6.5 Q3 4.2 5 4.2 Q7 4.2 7 6.5 V8.5" fill="none" stroke="#c9a02a" stroke-width="1.4"/><rect x="0.8" y="8.2" width="8.4" height="6.3" rx=".8" fill="#e8c04a" stroke="#b88a1a" stroke-width=".8"/></svg>
<div class="pressed" style="left:879px;top:264px;width:26px;height:23px"></div>
<div class="pressed" style="left:907px;top:264px;width:26px;height:23px"></div>
<svg class="ic" style="left:884px;top:269px" width="16" height="15" viewBox="0 0 16 15" ><rect x="5" y="0.8" width="10" height="7.5" fill="#f0f5fc" stroke="#3f6fc0" stroke-width="1.1"/><rect x="0.8" y="5" width="6.5" height="5.5" fill="#dfe9f8" stroke="#3f6fc0" stroke-width="1"/><path d="M3 11 H5.5 V12.8 H3 Z M1.5 13.6 H7" stroke="#2f5fb0" stroke-width="1" fill="#2f5fb0"/><path d="M7.5 3.4 H13 M7.5 5.6 H11" stroke="#3f5f9a" stroke-width="1"/></svg>
<svg class="ic" style="left:912px;top:269px" width="16" height="15" viewBox="0 0 16 15" ><rect x="5" y="0.8" width="10" height="7.5" fill="#f0f5fc" stroke="#3f6fc0" stroke-width="1.1"/><rect x="0.8" y="5" width="6.5" height="5.5" fill="#dfe9f8" stroke="#3f6fc0" stroke-width="1"/><path d="M3 11 H5.5 V12.8 H3 Z M1.5 13.6 H7" stroke="#2f5fb0" stroke-width="1" fill="#2f5fb0"/><path d="M7 2 L10 6.5 M10 2 L7 6.5" stroke="#e02020" stroke-width="1.6"/><path d="M11.5 3.2 H13.5 M11.5 5.4 H13.5" stroke="#3f5f9a" stroke-width="1"/></svg>
<div class="vsep" style="left:940px;top:269px;height:14px"></div>
<svg class="ic" style="left:954px;top:269px" width="15" height="15" viewBox="0 0 15 15" ><rect x="0.8" y="4.5" width="11.5" height="9" fill="#f6f9fd" stroke="#5f80c0" stroke-width="1"/><rect x="0.8" y="4.5" width="11.5" height="2.4" fill="#3f6fc0"/><path d="M6.5 9.5 L9.5 6" stroke="#555" stroke-width="1"/><circle cx="11" cy="3.5" r="2.8" fill="#3fae4a" stroke="#1f7a2a" stroke-width=".8"/><circle cx="12.5" cy="2" r="1.6" fill="#5fd06a"/></svg>
<svg class="ic" style="left:981px;top:269px" width="15" height="14" viewBox="0 0 15 14" ><rect x="1" y="0.8" width="12" height="8.5" fill="#ececec" stroke="#c4c4c4" stroke-width="1.2"/><path d="M3.5 3.6 H10.5 M3.5 6 H9" stroke="#cfcfcf" stroke-width="1"/><path d="M5.5 9.8 H8.5 V11.5 H5.5 Z M3 12.5 H11" stroke="#c8c8c8" stroke-width="1.2" fill="#c8c8c8"/></svg>
<svg class="ic" style="left:1002px;top:273px" width="10" height="7" viewBox="0 0 10 7" ><path d="M1 1.2 L5 5.2 L9 1.2" fill="none" stroke="#9a9a9a" stroke-width="1.2"/></svg>
<svg class="ic" style="left:1018px;top:268px" width="16" height="16" viewBox="0 0 16 16" ><rect x="1" y="3.5" width="12" height="11" fill="#fdfdf6" stroke="#c9a84a" stroke-width="1"/><rect x="1" y="3.5" width="10" height="2.2" fill="#3b7fc4"/><path d="M3 14 Q10 13.5 12.8 8 V14 Z" fill="#f3e3a8"/><path d="M12 0.5 L13 3 L15.5 4 L13 5 L12 7.5 L11 5 L8.5 4 L11 3 Z" fill="#fff6c8" stroke="#d9a520" stroke-width="1"/></svg>
<svg class="ic" style="left:1040px;top:273px" width="10" height="7" viewBox="0 0 10 7" ><path d="M1 1.2 L5 5.2 L9 1.2" fill="none" stroke="#2a2a2a" stroke-width="1.5"/></svg>
<div class="t" style="left:242px;top:287px;letter-spacing:0">&lt;terminated&gt; index (1) [PHP CLI Application] /usr/bin/php</div>
<div class="abs" style="left:242px;top:303px;width:791px;height:296px;background:#fff;overflow:hidden"><div class="con" style="position:absolute;left:2px;top:1px;white-space:pre;line-height:15px;color:#000;will-change:transform">phpinfo()
PHP Version =&gt; 5.6.1

System =&gt; Linux linux-a7fx 3.16.6-2-desktop #1 SMP PREEMPT Mon Oct 20 13:47:22 UTC 2014 (feb42ea) x
Server API =&gt; Command Line Interface
Virtual Directory Support =&gt; disabled
Configuration File (php.ini) Path =&gt; /etc/php5/cli
Loaded Configuration File =&gt; /tmp/zend_debug/session8879360542894054948.tmp/php.ini
Scan this dir for additional .ini files =&gt; /etc/php5/conf.d
Additional .ini files parsed =&gt; /etc/php5/conf.d/bz2.ini,
/etc/php5/conf.d/ctype.ini,
/etc/php5/conf.d/dom.ini,
/etc/php5/conf.d/gd.ini,
/etc/php5/conf.d/iconv.ini,
/etc/php5/conf.d/json.ini,
/etc/php5/conf.d/mbstring.ini,
/etc/php5/conf.d/mcrypt.ini,
/etc/php5/conf.d/mysql.ini,
/etc/php5/conf.d/mysqli.ini,
/etc/php5/conf.d/pdo.ini,</div></div>
<svg class="ic" style="left:1036px;top:306px" width="10" height="7" viewBox="0 0 10 7" ><path d="M1 5.5 L5 1.5 L9 5.5" fill="none" stroke="#8a8a8a" stroke-width="1.3"/></svg>
<div class="abs" style="left:1035px;top:326px;width:13px;height:249px;background:linear-gradient(90deg,#a5a3a3,#bdbbbb 2px,#bdbbbb 11px,#a5a3a3);border-radius:0 0 5px 5px"></div>
<div class="thumb tv" style="left:1035px;top:317px;width:13px;height:18px"></div>
<svg class="ic" style="left:1036px;top:577.5px" width="10" height="7" viewBox="0 0 10 7" ><path d="M1 5.5 L5 1.5 L9 5.5" fill="none" stroke="#8a8a8a" stroke-width="1.3"/></svg>
<svg class="ic" style="left:1036px;top:590px" width="10" height="7" viewBox="0 0 10 7" ><path d="M1 1.5 L5 5.5 L9 1.5" fill="none" stroke="#2a2a2a" stroke-width="1.7"/></svg>
<svg class="ic" style="left:244px;top:602.5px" width="7" height="10" viewBox="0 0 7 10" ><path d="M5.5 1 L1.5 5 L5.5 9" fill="none" stroke="#8a8a8a" stroke-width="1.3"/></svg>
<div class="abs" style="left:320px;top:600px;width:687px;height:14px;background:linear-gradient(#a5a3a3,#bdbbbb 2px,#bdbbbb 11px,#a5a3a3);border-radius:0 5px 5px 0"></div>
<div class="thumb th" style="left:256px;top:600px;width:73px;height:14px"></div>
<svg class="ic" style="left:1011.3px;top:603px" width="7" height="10" viewBox="0 0 7 10" ><path d="M5.5 1 L1.5 5 L5.5 9" fill="none" stroke="#8a8a8a" stroke-width="1.3"/></svg>
<svg class="ic" style="left:1023px;top:603px" width="7" height="10" viewBox="0 0 7 10" ><path d="M1.5 1 L5.5 5 L1.5 9" fill="none" stroke="#2a2a2a" stroke-width="1.7"/></svg>
</div>
<div class="abs" style="left:1055px;top:322px;width:1px;height:8px;background:repeating-linear-gradient(#9a9a9a 0 1px,transparent 1px 3px)"></div>
<!-- STATUS -->
<div id="status" class="st">
<svg class="ic" style="left:7px;top:625px" width="14" height="10" viewBox="0 0 14 10" ><path d="M5 1 L1.2 5 L5 9 M9 1 L12.8 5 L9 9" fill="none" stroke="#2060a8" stroke-width="1.1"/></svg>
<div class="t" style="left:27px;top:622px">PHP</div>
<div class="vsep" style="left:470px;top:621px;height:20px"></div>
<div class="t" style="left:478px;top:622px">Writable</div>
<div class="vsep" style="left:575px;top:621px;height:20px"></div>
<div class="t" style="left:583px;top:622px">Smart Insert</div>
<div class="vsep" style="left:673px;top:621px;height:20px"></div>
<div class="t" style="left:682px;top:622px">5 : 5</div>
<div class="hdl" style="left:770px;top:622px;height:19px"></div>
</div>
</body>
</html>
